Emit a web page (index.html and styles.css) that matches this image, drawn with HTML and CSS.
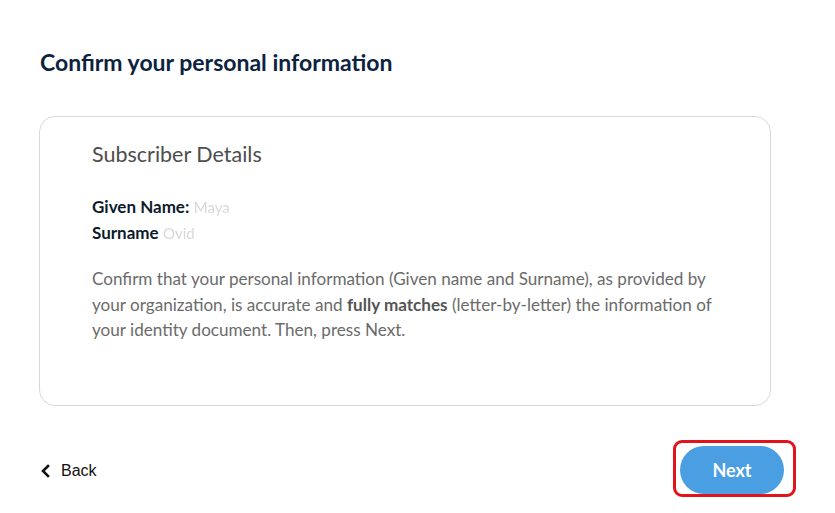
FILE: index.html
```html
<!DOCTYPE html>
<html>
<head>
<meta charset="utf-8">
<link rel="stylesheet" href="styles.css">
</head>
<body>
<main class="page">
  <h1 class="title">Confirm your personal information</h1>
  <section class="card">
    <h2 class="card-title">Subscriber Details</h2>
    <div class="fields">
      <div class="field"><b>Given Name:</b> <span class="masked">Maya</span></div>
      <div class="field"><b>Surname</b> <span class="masked">Ovid</span></div>
    </div>
    <p class="note">Confirm that your personal information (Given name and Surname), as provided by your organization, is accurate and <strong>fully matches</strong> (letter-by-letter) the information of your identity document. Then, press Next.</p>
  </section>
  <footer class="actions">
    <a class="back" href="#">
      <svg width="11" height="14" viewBox="0 0 11 14"><path d="M8 2 L3 7 L8 12" fill="none" stroke="#111" stroke-width="2.6" stroke-linecap="square" stroke-linejoin="miter"/></svg>
      <span>Back</span>
    </a>
    <div class="highlight">
      <button class="next">Next</button>
    </div>
  </footer>
</main>
</body>
</html>
```
FILE: styles.css
```css
html, body {
  margin: 0;
  padding: 0;
  background: #fff;
}
.page {
  padding: 47px 64px 0 39px;
  font-family: Lato, "Open Sans", sans-serif;
}
.title {
  margin: 0 0 39px 1px;
  font-size: 23px;
  font-weight: 700;
  color: #0c2340;
  line-height: 30px;
}
.card {
  border: 1px solid #d9d9d9;
  border-radius: 16px;
  height: 290px;
  box-sizing: border-box;
  width: 732px;
  padding: 22px 52px 0 52px;
}
.card-title {
  margin: 0 0 25px 0;
  font-size: 21.5px;
  font-weight: 400;
  color: #4d4d4d;
  line-height: 30px;
}
.fields {
  font-size: 17px;
  line-height: 25px;
  color: #0c1b2b;
}
.field b {
  font-weight: 700;
}
.masked {
  color: #d8d8d8;
  filter: blur(0.6px);
  font-size: 15px;
}
.note {
  margin: 20px 0 0 0;
  font-size: 17.1px;
  line-height: 25.5px;
  color: #6b6b6b;
}
.note strong {
  font-weight: 700;
  color: #555;
}
.actions {
  display: flex;
  justify-content: space-between;
  align-items: center;
  margin-top: 34px;
  width: 757px;
}
.back {
  display: flex;
  align-items: center;
  gap: 10px;
  text-decoration: none;
  color: #111;
  font-family: "Liberation Sans", Arial, sans-serif;
  font-size: 16px;
  margin-left: 1px;
  margin-top: 4px;
}
.highlight {
  border: 3px solid #e3131b;
  border-radius: 9px;
  padding: 3px 9px 0 4px;
  height: 57px;
  box-sizing: border-box;
}
.next {
  width: 104px;
  height: 48px;
  border: none;
  border-radius: 24px;
  background: #4a9ee2;
  color: #fff;
  font-family: Lato, sans-serif;
  font-weight: 700;
  font-size: 18px;
  cursor: pointer;
}
```
